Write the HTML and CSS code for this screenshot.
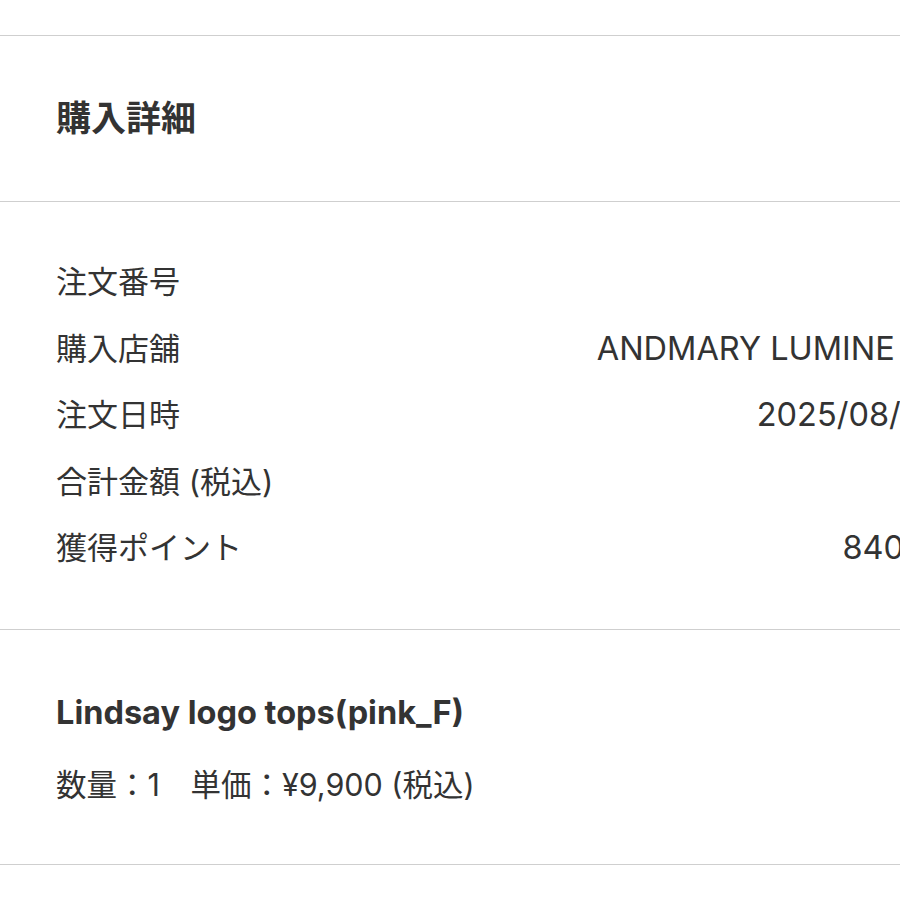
FILE: index.html
```html
<!DOCTYPE html>
<html>

<head>
  <title>購入詳細</title>
  <link rel="stylesheet" href="styles.css">
</head>

<body>
  <div class="page">
    <section class="block head">
      <h1>購入詳細</h1>
    </section>

    <section class="block info">
      <div class="row">
        <span class="label">注文番号</span>
        <span class="value"></span>
      </div>
      <div class="row">
        <span class="label">購入店舗</span>
        <span class="value">ANDMARY LUMINE 池袋本店</span>
      </div>
      <div class="row">
        <span class="label">注文日時</span>
        <span class="value">2025/08/18 20:46</span>
      </div>
      <div class="row">
        <span class="label">合計金額 (税込)</span>
        <span class="value"></span>
      </div>
      <div class="row">
        <span class="label">獲得ポイント</span>
        <span class="value">840ポイント</span>
      </div>
    </section>

    <section class="block item">
      <div class="item-name">Lindsay logo tops(pink_F)</div>
      <div class="item-meta">数量：1　単価：¥9,900 (税込)</div>
    </section>
  </div>
</body>

</html>
```

FILE: styles.css
```css
html,
body {
  margin: 0;
  overflow: hidden;
  background: #ffffff;
}

body {
  font-family: Inter, "Noto Sans CJK JP", sans-serif;
  color: #333333;
}

.page {
  width: 1034px;
  margin-top: 35px;
  border-top: 1px solid #cfcfcf;
}

.block {
  padding: 0 0 0 56px;
  border-bottom: 1px solid #cfcfcf;
}

.head {
  padding-top: 57px;
  padding-bottom: 58px;
}

.head h1 {
  margin: 0;
  font-size: 35px;
  line-height: 50px;
  font-weight: bold;
}

.info {
  padding-top: 47px;
  padding-bottom: 47px;
}

.row {
  display: flex;
  justify-content: space-between;
  font-size: 31px;
  line-height: 66.5px;
  white-space: nowrap;
}

.row .value {
  font-size: 32.5px;
}

.item {
  padding-top: 58px;
  padding-bottom: 54px;
}

.item-name {
  font-size: 32.5px;
  line-height: 50px;
  font-weight: bold;
}

.item-meta {
  margin-top: 22px;
  font-size: 30.5px;
  line-height: 50px;
}
```
